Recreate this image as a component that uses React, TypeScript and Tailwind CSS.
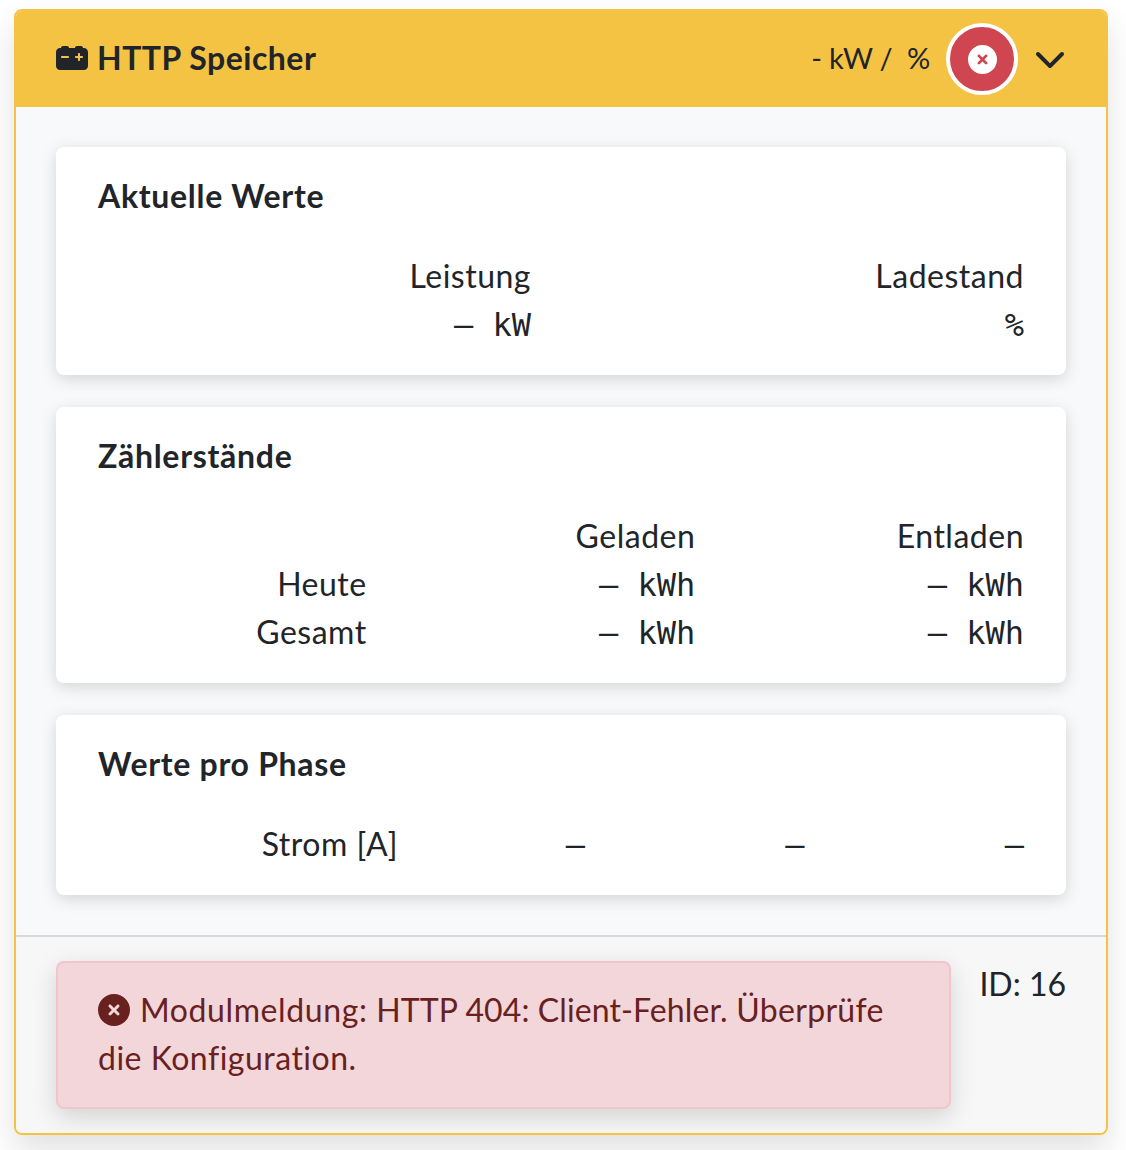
import { FaCarBattery, FaChevronDown, FaCircleXmark } from "react-icons/fa6";

const mono = "font-['DejaVu_Sans_Mono','Liberation_Mono',monospace] text-[32px] tracking-normal text-right translate-y-[1px]";
const label = "text-right";

function Card({ title, className, children }: { title: string; className: string; children: React.ReactNode }) {
  return (
    <section className={`bg-white rounded-lg shadow-[0_4px_16px_rgba(0,0,0,0.15)] px-[42px] pt-[25px] ${className}`}>
      <h3 className="text-[32px] leading-[48px] font-bold tracking-[0.7px] mb-[32px]">{title}</h3>
      {children}
    </section>
  );
}

export default function App() {
  return (
    <div className="bg-white h-[1150px] pt-[9px] pl-[14px] pr-[18px] font-['Lato','Noto_Sans',sans-serif] text-[32px] leading-[48px] tracking-[0.5px] text-[#212529]">
      <div className="h-[1126px] rounded-lg border-2 border-[#f5c343] bg-[#f8f9fa] shadow-[0_16px_32px_rgba(0,0,0,0.12)] flex flex-col overflow-hidden">
        <header className="h-[96px] shrink-0 bg-[#f5c343] flex items-center pl-[40px] pr-[40px]">
          <FaCarBattery className="w-[32px] h-[32px] mr-[9px] -translate-y-[1px]" />
          <span className="font-bold text-[32px] -translate-y-[1px]">HTTP Speicher</span>
          <span className="ml-auto text-[29px] tracking-[-0.2px] mr-[16px] -translate-y-[1px]">- kW /&nbsp;&nbsp;%</span>
          <span className="w-[72px] h-[72px] rounded-full bg-[#cf4550] border-4 border-white flex items-center justify-center">
            <FaCircleXmark className="w-[29px] h-[29px] text-white" />
          </span>
          <FaChevronDown className="w-[32px] h-[32px] ml-[16px] -translate-y-[1px]" />
        </header>
        <main className="flex-1 pt-[40px] px-[40px] flex flex-col gap-[32px]">
          <Card title="Aktuelle Werte" className="h-[228px]">
            <div className="grid grid-cols-2 gap-x-[60px]">
              <div className={label}>Leistung</div>
              <div className={label}>Ladestand</div>
              <div className={mono}>–&nbsp;kW</div>
              <div className={mono}>%</div>
            </div>
          </Card>
          <Card title="Zählerstände" className="h-[276px]">
            <div className="grid grid-cols-3 gap-x-[60px]">
              <div />
              <div className={label}>Geladen</div>
              <div className={label}>Entladen</div>
              <div className={label}>Heute</div>
              <div className={mono}>–&nbsp;kWh</div>
              <div className={mono}>–&nbsp;kWh</div>
              <div className={label}>Gesamt</div>
              <div className={mono}>–&nbsp;kWh</div>
              <div className={mono}>–&nbsp;kWh</div>
            </div>
          </Card>
          <Card title="Werte pro Phase" className="h-[180px]">
            <div className="grid grid-cols-[300px_187px_219.5px_219.5px]">
              <div className={label}>Strom [A]</div>
              <div className={mono}>–</div>
              <div className={mono}>–</div>
              <div className={mono}>–</div>
            </div>
          </Card>
        </main>
        <footer className="h-[198px] shrink-0 border-t-2 border-[#d9d9d9] bg-[#f7f7f7] pt-[24px] px-[40px] flex items-start justify-between">
          <div className="w-[895px] h-[148px] rounded-lg border-2 border-[#f0c6cb] bg-[#f3d6d9] text-[#69211f] px-[40px] py-[23px] shadow-[0_8px_24px_rgba(0,0,0,0.15)]">
            <FaCircleXmark className="inline w-[32px] h-[32px] mr-[10px] align-[-4px]" />
            <span className="tracking-[0.6px]">Modulmeldung:</span>{" "}
            <span className="tracking-[0.1px]">HTTP 404: Client-Fehler.</span>{" "}
            <span className="tracking-[0.3px]">Überprüfe</span> die Konfiguration.
          </div>
          <div className="tracking-normal -translate-y-[1px]">ID: 16</div>
        </footer>
      </div>
    </div>
  );
}
